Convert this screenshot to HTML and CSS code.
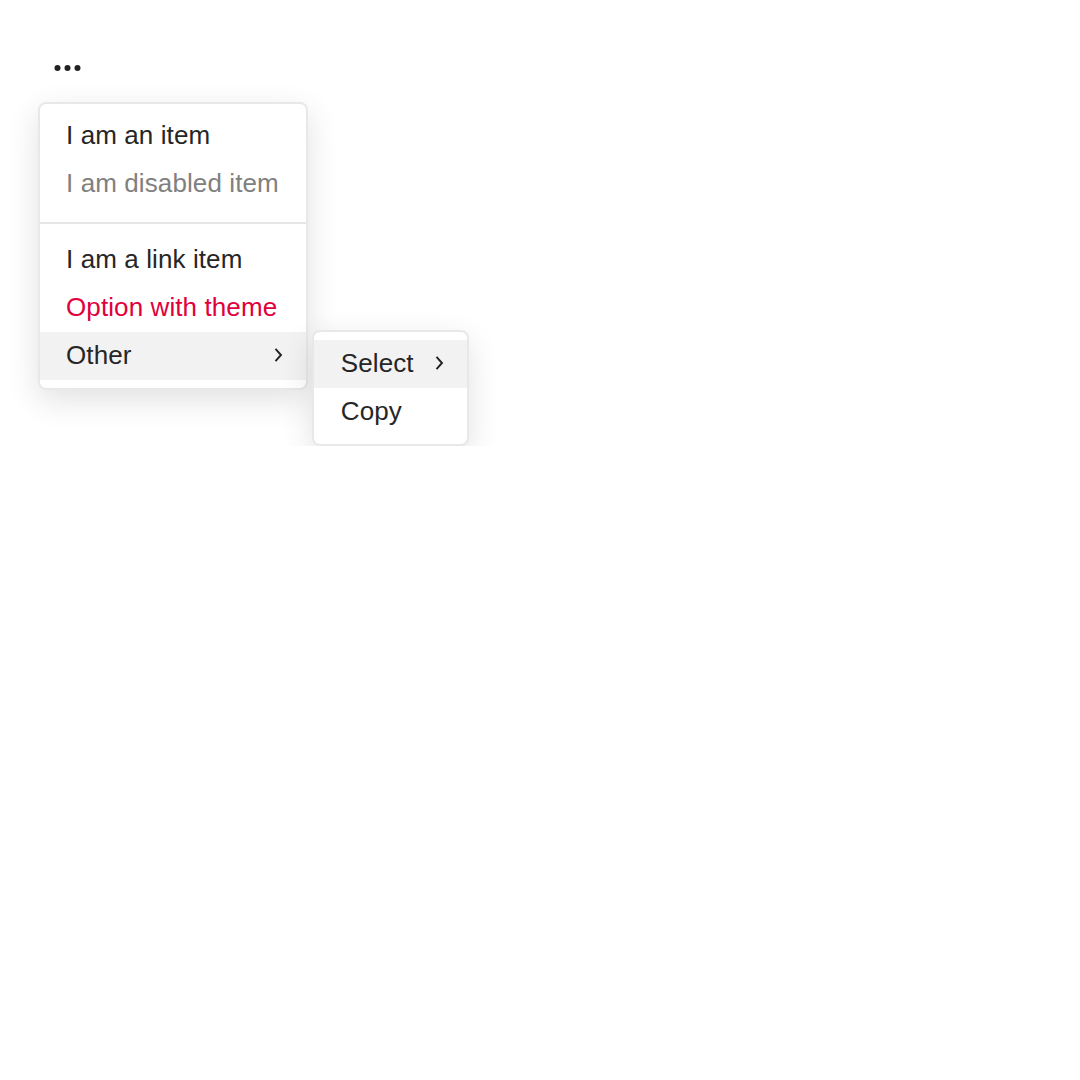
FILE: index.html
```html
<!DOCTYPE html>
<html lang="en">
<head>
  <meta charset="UTF-8">
  <meta name="viewport" content="width=device-width, initial-scale=1.0">
  <title>Dropdown menu</title>
  <link rel="stylesheet" href="styles.css">
</head>
<body>
  <div class="dropdown">
    <button class="trigger" type="button" aria-label="More">
      <svg width="28" height="8" viewBox="0 0 28 8">
        <circle cx="3.5" cy="4" r="3" fill="#222"/>
        <circle cx="13.5" cy="4" r="3" fill="#222"/>
        <circle cx="23.5" cy="4" r="3" fill="#222"/>
      </svg>
    </button>

    <ul class="menu">
      <li class="item">I am an item</li>
      <li class="item disabled">I am disabled item</li>
      <li class="divider"></li>
      <li class="item">I am a link item</li>
      <li class="item theme">Option with theme</li>
      <li class="item active has-sub">
        <span>Other</span>
        <svg class="chevron" width="10" height="16" viewBox="0 0 10 16">
          <path d="M2.5 1.8 L8 8 L2.5 14.2" fill="none" stroke="#222" stroke-width="1.9"/>
        </svg>
        <ul class="menu submenu">
          <li class="item active has-sub">
            <span>Select</span>
            <svg class="chevron" width="10" height="16" viewBox="0 0 10 16">
              <path d="M2.5 1.8 L8 8 L2.5 14.2" fill="none" stroke="#222" stroke-width="1.9"/>
            </svg>
          </li>
          <li class="item">Copy</li>
        </ul>
      </li>
    </ul>
  </div>
</body>
</html>
```

FILE: styles.css
```css
body {
  margin: 0;
  padding: 56px 38px;
  background-color: #fff;
  color: #262626;
  font-family: "Liberation Sans", Arial, sans-serif;
}
.dropdown {
  display: inline-block;
}
.trigger {
  display: block;
  margin: 8px 0 0 16px;
  padding: 0;
  height: 8px;
  border: none;
  background: none;
  cursor: pointer;
}
.trigger svg {
  display: block;
}
.menu {
  list-style: none;
  margin: 30px 0 0;
  padding: 8px 0;
  background-color: #fff;
  border: 2px solid #e8e8e8;
  border-radius: 8px;
  box-shadow: 0 10px 32px rgba(0, 0, 0, 0.12);
}
.item {
  position: relative;
  display: flex;
  align-items: center;
  justify-content: space-between;
  box-sizing: border-box;
  height: 48px;
  padding: 0 27px 2px 26px;
  font-size: 26px;
  letter-spacing: 0.1px;
  white-space: nowrap;
  cursor: pointer;
}
.item.disabled {
  color: #808080;
  cursor: default;
}
.item.theme {
  color: #e0003c;
}
.item.active {
  background-color: #f2f2f2;
}
.divider {
  height: 2px;
  margin: 14px 0 12px;
  background-color: #e6e6e6;
}
.chevron {
  display: block;
  margin-left: 22px;
  margin-right: -4px;
}
.submenu {
  position: absolute;
  top: -2px;
  left: calc(100% + 6px);
  margin: 0;
  cursor: default;
}
.submenu .item {
  padding: 0 23px 2px 27px;
}
.submenu .chevron {
  margin-left: 20px;
  margin-right: 0;
}
```
